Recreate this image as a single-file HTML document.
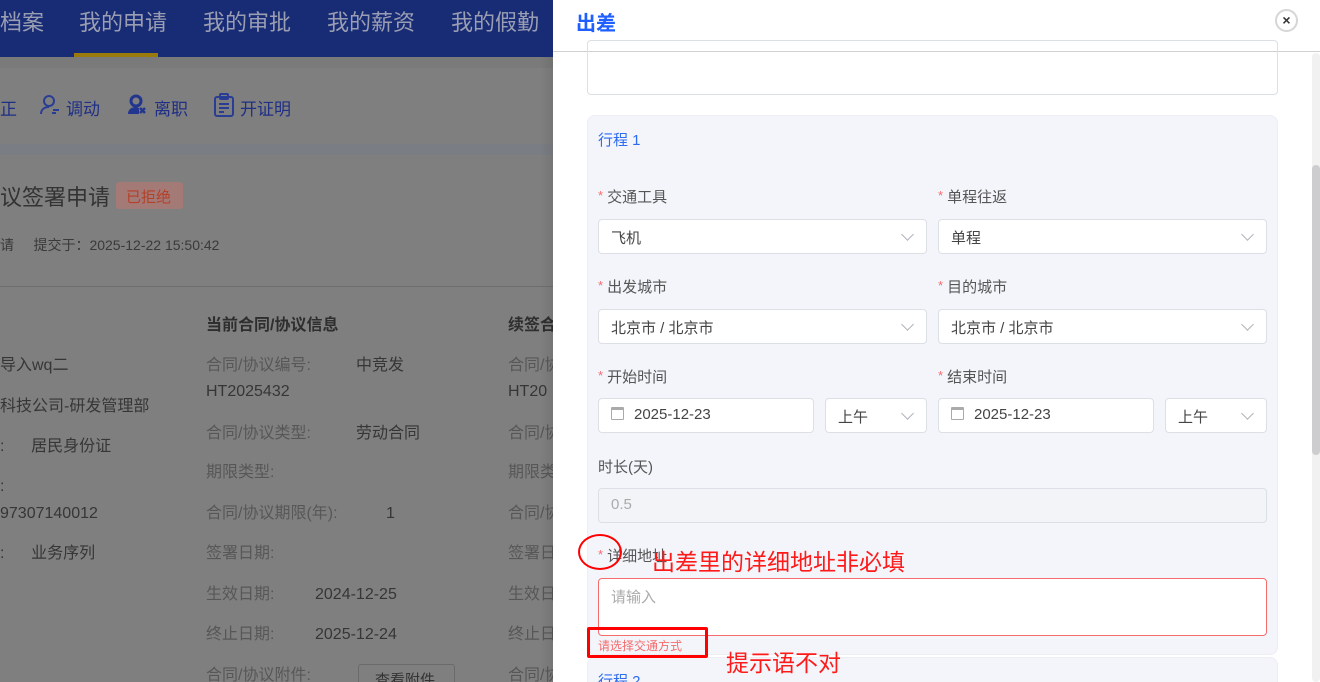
<!DOCTYPE html>
<html style="overflow:hidden;background:#7f7f7f;width:1320px;height:682px"><head><meta charset="utf-8"><style>
*{box-sizing:border-box;margin:0;padding:0}
body{width:1320px;height:682px;overflow:hidden;position:relative;font-family:"Liberation Sans","Noto Sans CJK SC",sans-serif;background:#7f7f7f}
.a{position:absolute;white-space:nowrap}
.hdr{position:absolute;left:0;top:0;width:553px;height:57px;background:#182b75}
.nav{position:absolute;top:5px;font-size:22px;color:#9a9eb2}
.l{color:#363636;font-size:16px;line-height:20px}
.g{color:#575757;font-size:16px;line-height:20px}
.tb{color:#1f2f86;font-size:17px}
.drawer{position:absolute;left:553px;top:0;width:767px;height:682px;background:#fff;overflow:hidden}
.lab{position:absolute;font-size:15px;color:#555;white-space:nowrap}
.lab b{color:#f56c6c;font-weight:normal;font-size:13px;margin-right:4px;position:relative;top:-2px}
.inp{position:absolute;height:35px;background:#fff;border:1px solid #dcdfe6;border-radius:4px;font-size:15px;color:#444;padding:7px 12px;white-space:nowrap}
.chev{position:absolute;right:14px;top:10px;width:9px;height:9px;border-right:1px solid #b0b3ba;border-bottom:1px solid #b0b3ba;transform:rotate(45deg)}
.cal{display:inline-block;width:13px;height:13px;border:1px solid #aaa;border-top-width:3px;margin-right:10px;vertical-align:-1px;border-radius:1px}
.red{color:#ff1a1a;font-size:23px}
</style></head><body>
<div class="a" style="left:0;top:0;width:553px;height:682px;background:#7f7f7f"></div>
<div class="hdr"></div>
<div class="nav a" style="left:0">档案</div>
<div class="nav a" style="left:79px">我的申请</div>
<div class="nav a" style="left:203px">我的审批</div>
<div class="nav a" style="left:327px">我的薪资</div>
<div class="nav a" style="left:451px">我的假勤</div>
<div class="a" style="left:74px;top:53px;width:84px;height:4px;background:#9a7a0a"></div>
<div class="a" style="left:0;top:57px;width:553px;height:11px;background:#7a7a7a"></div>
<div class="a" style="left:0;top:144px;width:553px;height:11px;background:#7b7d84"></div>
<div class="tb a" style="left:0;top:95px">正</div>
<svg class="a" style="left:39px;top:94px" width="22" height="22" viewBox="0 0 22 22" fill="none" stroke="#2a3d95" stroke-width="2"><circle cx="10" cy="7" r="5"/><path d="M2 20c0-5 4-7 8-7M14 16h6M17 19h-4"/></svg>
<div class="tb a" style="left:66px;top:95px">调动</div>
<svg class="a" style="left:127px;top:94px" width="22" height="22" viewBox="0 0 22 22"><circle cx="9" cy="7" r="5" fill="none" stroke="#22358f" stroke-width="3"/><path d="M1 20c0-5 4-7 8-7l3 1v6z" fill="#22358f"/><path d="M13 14l5 5M18 14l-5 5" stroke="#22358f" stroke-width="2.5"/></svg>
<div class="tb a" style="left:154px;top:95px">离职</div>
<svg class="a" style="left:213px;top:93px" width="22" height="24" viewBox="0 0 22 24" fill="none" stroke="#2a3d95" stroke-width="2"><rect x="2" y="4" width="18" height="19" rx="2"/><rect x="7" y="1" width="8" height="5" rx="1"/><path d="M6 11h10M6 15h10M6 19h5"/></svg>
<div class="tb a" style="left:240px;top:95px">开证明</div>
<div class="a" style="left:0;top:180px;font-size:22px;color:#333">议签署申请</div>
<div class="a" style="left:116px;top:182px;width:67px;height:27px;background:#a47a76;border-radius:3px;color:#b4402a;font-size:15px;padding:4px 10px">已拒绝</div>
<div class="a" style="left:0;top:235px;font-size:14px;color:#3a3a3a">请&nbsp;&nbsp;&nbsp;&nbsp;&nbsp;提交于：2025-12-22 15:50:42</div>
<div class="a" style="left:0;top:286px;width:553px;height:1px;background:#6e6e6e"></div>
<div class="a l" style="left:206px;top:316px;font-weight:bold;color:#2e2e2e">当前合同/协议信息</div>
<div class="a l" style="left:508px;top:316px;font-weight:bold;color:#2e2e2e">续签合</div>
<div class="a l" style="left:0;top:356px">导入wq二</div>
<div class="a l" style="left:0;top:397px">科技公司-研发管理部</div>
<div class="a l" style="left:0;top:437px">:&nbsp;&nbsp;&nbsp;&nbsp;&nbsp;&nbsp;居民身份证</div>
<div class="a l" style="left:0;top:477px">:</div>
<div class="a l" style="left:0;top:504px">97307140012</div>
<div class="a l" style="left:0;top:544px">:&nbsp;&nbsp;&nbsp;&nbsp;&nbsp;&nbsp;业务序列</div>
<div class="a g" style="left:206px;top:356px">合同/协议编号:</div><div class="a l" style="left:356px;top:356px">中竞发</div>
<div class="a l" style="left:206px;top:382px">HT2025432</div>
<div class="a g" style="left:206px;top:424px">合同/协议类型:</div><div class="a l" style="left:356px;top:424px">劳动合同</div>
<div class="a g" style="left:206px;top:463px">期限类型:</div>
<div class="a g" style="left:206px;top:504px">合同/协议期限(年):</div><div class="a l" style="left:386px;top:504px">1</div>
<div class="a g" style="left:206px;top:544px">签署日期:</div>
<div class="a g" style="left:206px;top:585px">生效日期:</div><div class="a l" style="left:315px;top:585px">2024-12-25</div>
<div class="a g" style="left:206px;top:625px">终止日期:</div><div class="a l" style="left:315px;top:625px">2025-12-24</div>
<div class="a g" style="left:206px;top:666px">合同/协议附件:</div>
<div class="a" style="left:358px;top:664px;width:97px;height:18px;border:1px solid #6a6a6a;border-bottom:none;border-radius:3px 3px 0 0;color:#333;font-size:15px;padding:4px 16px;overflow:hidden">查看附件</div>
<div class="a g" style="left:508px;top:356px">合同/协</div><div class="a l" style="left:508px;top:382px">HT20</div>
<div class="a g" style="left:508px;top:424px">合同/协</div><div class="a g" style="left:508px;top:463px">期限类</div>
<div class="a g" style="left:508px;top:504px">合同/协</div><div class="a g" style="left:508px;top:544px">签署日</div>
<div class="a g" style="left:508px;top:585px">生效日</div><div class="a g" style="left:508px;top:625px">终止日</div>
<div class="a g" style="left:508px;top:666px">合同/协</div>
<div class="a" style="left:540px;top:57px;width:13px;height:625px;background:linear-gradient(90deg,rgba(0,0,0,0),rgba(0,0,0,.08))"></div>

<div class="drawer">
 <div class="a" style="left:23px;top:7px;font-size:20px;font-weight:bold;color:#1f5eff">出差</div>
 <div class="a" style="left:722px;top:9px;width:23px;height:23px;border:2px solid #d6d6d6;border-radius:50%;font-size:14px;font-weight:bold;color:#333;text-align:center;line-height:18px">×</div>
 <div class="a" style="left:0;top:51px;width:767px;height:1px;background:#d0d0d0"></div>
 <div class="a" style="left:34px;top:40px;width:691px;height:55px;border:1px solid #dcdfe6;border-radius:4px"></div>
 <div class="a" style="left:759px;top:53px;width:8px;height:629px;background:#f1f1f1;border-radius:4px"></div>
 <div class="a" style="left:759px;top:165px;width:8px;height:290px;background:#cdcdd0;border-radius:4px"></div>
 <div class="a" style="left:34px;top:115px;width:691px;height:540px;background:#f3f5fa;border-radius:8px;border:1px solid #eceef4"></div>
 <div class="a" style="left:45px;top:129px;font-size:15px;color:#2d6bf0">行程 1</div>
 <div class="lab" style="left:45px;top:186px"><b>*</b>交通工具</div>
 <div class="lab" style="left:385px;top:186px"><b>*</b>单程往返</div>
 <div class="inp" style="left:45px;top:219px;width:329px">飞机<i class="chev"></i></div>
 <div class="inp" style="left:385px;top:219px;width:329px">单程<i class="chev"></i></div>
 <div class="lab" style="left:45px;top:276px"><b>*</b>出发城市</div>
 <div class="lab" style="left:385px;top:276px"><b>*</b>目的城市</div>
 <div class="inp" style="left:45px;top:309px;width:329px">北京市 / 北京市<i class="chev"></i></div>
 <div class="inp" style="left:385px;top:309px;width:329px">北京市 / 北京市<i class="chev"></i></div>
 <div class="lab" style="left:45px;top:366px"><b>*</b>开始时间</div>
 <div class="lab" style="left:385px;top:366px"><b>*</b>结束时间</div>
 <div class="inp" style="left:45px;top:398px;width:216px"><i class="cal"></i>2025-12-23</div>
 <div class="inp" style="left:272px;top:398px;width:102px">上午<i class="chev"></i></div>
 <div class="inp" style="left:385px;top:398px;width:216px"><i class="cal"></i>2025-12-23</div>
 <div class="inp" style="left:612px;top:398px;width:102px">上午<i class="chev"></i></div>
 <div class="lab" style="left:45px;top:456px">时长(天)</div>
 <div class="inp" style="left:45px;top:488px;width:669px;background:#f3f4f7;color:#aaa">0.5</div>
 <div class="lab" style="left:45px;top:545px"><b>*</b>详细地址</div>
 <div class="inp" style="left:45px;top:578px;width:669px;height:58px;border-color:#f56c6c;color:#aaa">请输入</div>
 <div class="a" style="left:45px;top:637px;font-size:12px;color:#f56c6c">请选择交通方式</div>
 <div class="a" style="left:34px;top:657px;width:691px;height:40px;background:#f3f5fa;border-radius:8px;border:1px solid #eceef4"></div>
 <div class="a" style="left:45px;top:670px;font-size:15px;color:#2d6bf0">行程 2</div>
 <div class="a" style="left:25px;top:534px;width:44px;height:36px;border:2px solid #f00;border-radius:50%"></div>
 <div class="a red" style="left:99px;top:543px">出差里的详细地址非必填</div>
 <div class="a" style="left:34px;top:627px;width:121px;height:31px;border:3px solid #f00;border-radius:2px"></div>
 <div class="a red" style="left:173px;top:644px">提示语不对</div>
</div>
</body></html>
